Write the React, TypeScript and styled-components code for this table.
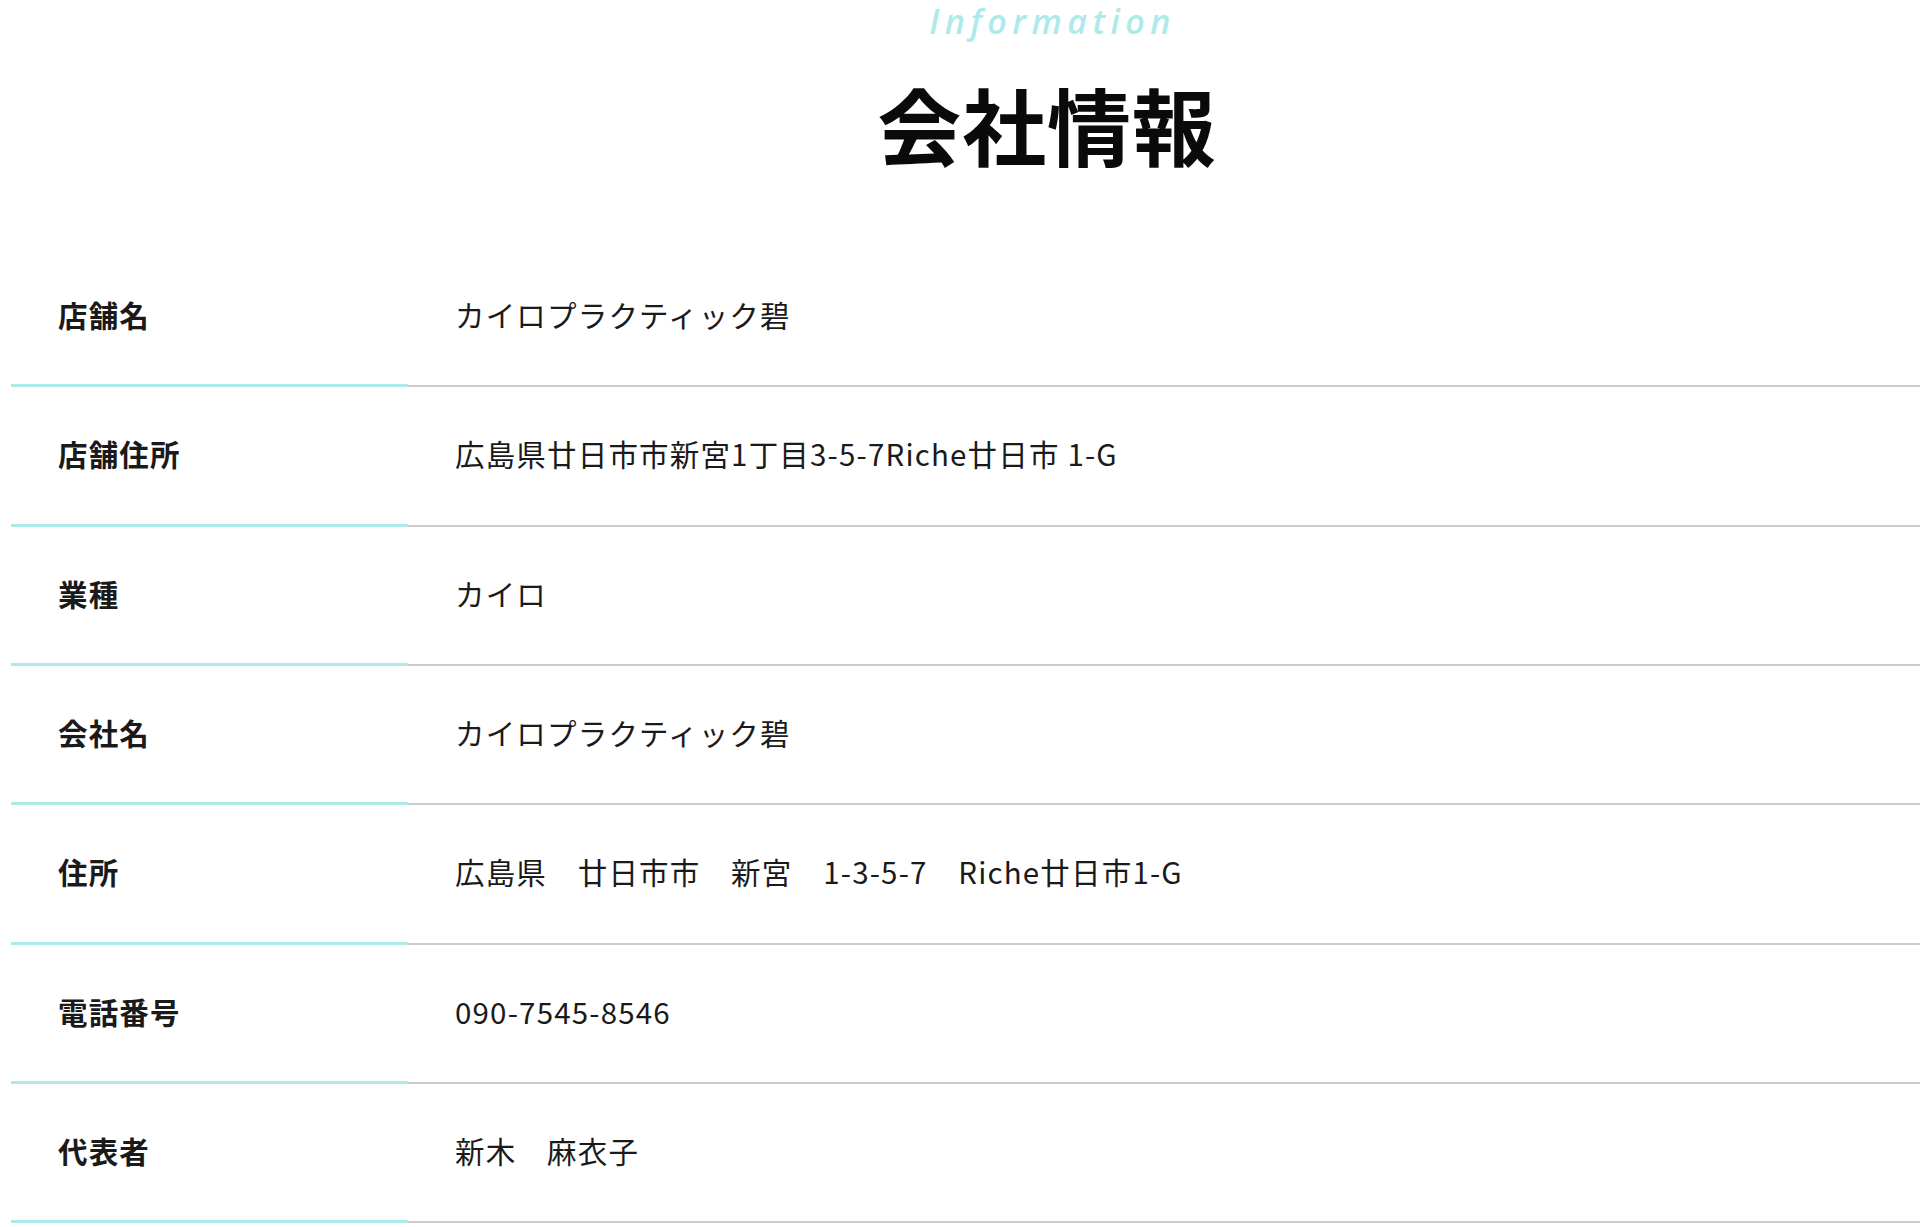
import React from "react";
import styled, { createGlobalStyle } from "styled-components";

const Global = createGlobalStyle`
  html, body {
    margin: 0;
    padding: 0;
    background: #ffffff;
    overflow: hidden;
  }
  body {
    font-family: "Noto Sans CJK JP", "Noto Sans", sans-serif;
    color: #1a1a1a;
  }
`;

const Page = styled.div`
  width: 2072px;
  margin-left: 11px;
`;

const Header = styled.header`
  display: flex;
  flex-direction: column;
  align-items: center;
`;

const Eyebrow = styled.div`
  font-family: "Open Sans", "Noto Sans", sans-serif;
  font-style: italic;
  font-weight: 600;
  font-size: 34px;
  line-height: 46px;
  letter-spacing: 0.16em;
  padding-left: 0.32em;
  color: #aeeaea;
  margin-top: -2px;
`;

const Title = styled.h2`
  margin: 20px 0 0;
  font-family: "Noto Sans CJK JP", sans-serif;
  font-weight: 700;
  font-size: 84px;
  line-height: 120px;
  letter-spacing: 0.01em;
  color: #0a0a0a;
`;

const Table = styled.dl`
  margin: 64px 0 0;
  display: flex;
  flex-direction: column;
`;

const Row = styled.div`
  display: grid;
  grid-template-columns: 397px 1fr;
  height: 139.33px;
`;

const Label = styled.dt`
  display: flex;
  align-items: center;
  padding: 0 47px 4px;
  border-bottom: 3px solid #aeeaea;
  font-weight: 700;
  font-size: 29.5px;
  letter-spacing: 0.04em;
  color: #1a1a1a;
`;

const Value = styled.dd`
  margin: 0;
  display: flex;
  align-items: center;
  padding: 0 47px 5px;
  border-bottom: 2px solid #cccccc;
  font-weight: 400;
  font-size: 29.5px;
  letter-spacing: 0.04em;
  color: #1a1a1a;
  white-space: pre;
`;

const rows: [string, string][] = [
  ["店舗名", "カイロプラクティック碧"],
  ["店舗住所", "広島県廿日市市新宮1丁目3-5-7Riche廿日市 1-G"],
  ["業種", "カイロ"],
  ["会社名", "カイロプラクティック碧"],
  ["住所", "広島県　廿日市市　新宮　1-3-5-7　Riche廿日市1-G"],
  ["電話番号", "090-7545-8546"],
  ["代表者", "新木　麻衣子"],
];

export default function App() {
  return (
    <>
      <Global />
      <Page>
        <Header>
          <Eyebrow>Information</Eyebrow>
          <Title>会社情報</Title>
        </Header>
        <Table>
          {rows.map(([k, v]) => (
            <Row key={k}>
              <Label>{k}</Label>
              <Value>{v}</Value>
            </Row>
          ))}
        </Table>
      </Page>
    </>
  );
}
